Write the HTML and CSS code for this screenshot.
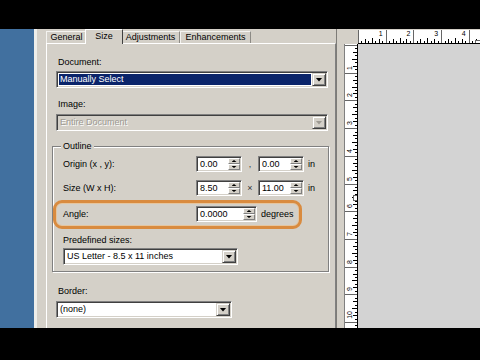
FILE: index.html
```html
<!DOCTYPE html>
<html>
<head>
<meta charset="utf-8">
<title>Size</title>
<link rel="stylesheet" href="styles.css">
</head>
<body>
<div class="screen">
  <div class="topbar"></div>
  <div class="app">
    <div class="sidebar"></div>
    <div class="edge"></div>
    <div class="dialog">
      <div class="tabs">
        <div class="tab t-gen">General</div>
        <div class="tab t-size active">Size</div>
        <div class="tab t-adj">Adjustments</div>
        <div class="tab t-enh">Enhancements</div>
      </div>
      <div class="panel">
        <div class="label l-doc">Document:</div>
        <div class="combo wide selected"><span class="combo-text">Manually Select</span><span class="combo-btn"><i class="arrow"></i></span></div>
        <div class="label l-img">Image:</div>
        <div class="combo wide disabled"><span class="combo-text">Entire Document</span><span class="combo-btn"><i class="arrow"></i></span></div>

        <div class="group">
          <div class="group-title">Outline</div>
          <div class="row">
            <span class="row-label">Origin (x , y):</span>
            <span class="spin"><span class="spin-text">0.00</span><span class="spin-btns"><i class="up"></i><i class="down"></i></span></span>
            <span class="sep">,</span>
            <span class="spin"><span class="spin-text">0.00</span><span class="spin-btns"><i class="up"></i><i class="down"></i></span></span>
            <span class="unit">in</span>
          </div>
          <div class="row r-size">
            <span class="row-label">Size (W x H):</span>
            <span class="spin"><span class="spin-text">8.50</span><span class="spin-btns"><i class="up"></i><i class="down"></i></span></span>
            <span class="sep">&times;</span>
            <span class="spin"><span class="spin-text">11.00</span><span class="spin-btns"><i class="up"></i><i class="down"></i></span></span>
            <span class="unit">in</span>
          </div>
          <div class="row r-angle">
            <span class="row-label">Angle:</span>
            <span class="spin long"><span class="spin-text">0.0000</span><span class="spin-btns"><i class="up"></i><i class="down"></i></span></span>
            <span class="unit">degrees</span>
          </div>
          <div class="label in l-pre">Predefined sizes:</div>
          <div class="combo pre"><span class="combo-text">US Letter - 8.5 x 11 inches</span><span class="combo-btn"><i class="arrow"></i></span></div>
          <div class="highlight"></div>
        </div>

        <div class="label l-border">Border:</div>
        <div class="combo border-combo"><span class="combo-text">(none)</span><span class="combo-btn"><i class="arrow"></i></span></div>
      </div>
    </div>
    <div class="divider"></div>
    <div class="workspace">
      <div class="ruler-row">
        <div class="corner"></div>
        <div class="hruler">
          <div class="hcell">1</div>
          <div class="hcell">2</div>
          <div class="hcell">3</div>
          <div class="hcell">4</div>
          <div class="hcell"></div>
          <span class="marker-h"></span>
        </div>
      </div>
      <div class="work-body">
        <div class="vruler">
          <div class="vcell"><span>1</span></div>
          <div class="vcell"><span>2</span></div>
          <div class="vcell"><span>3</span></div>
          <div class="vcell"><span>4</span></div>
          <div class="vcell"><span>5</span></div>
          <div class="vcell"><span>6</span></div>
          <div class="vcell"><span>7</span></div>
          <div class="vcell"><span>8</span></div>
          <div class="vcell"><span>9</span></div>
          <div class="vcell"><span>10</span></div>
          <div class="vcell"></div>
          <span class="marker-v"></span>
        </div>
        <div class="canvas"></div>
      </div>
    </div>
  </div>
  <div class="bottombar"></div>
</div>
</body>
</html>
```

FILE: styles.css
```css
html, body {
  margin: 0;
  padding: 0;
  background: #000;
}
body {
  font-family: "Liberation Sans", Arial, sans-serif;
  font-size: 9px;
  color: #000;
}
.screen {
  width: 480px;
  height: 360px;
  display: flex;
  flex-direction: column;
  overflow: hidden;
}
.topbar {
  height: 29px;
  flex: none;
  background: #000;
}
.bottombar {
  flex: 1;
  background: #000;
}
.app {
  height: 299px;
  flex: none;
  display: flex;
  overflow: hidden;
}
.sidebar {
  width: 34px;
  flex: none;
  background: #41709f;
}
.edge {
  width: 3px;
  flex: none;
  background: #eeeeea;
}
.dialog {
  width: 299px;
  flex: none;
  box-sizing: border-box;
  padding-left: 9px;
  background: #d4d0c8;
  display: flex;
  flex-direction: column;
}

/* tabs */
.tabs {
  height: 14px;
  flex: none;
  display: flex;
  align-items: flex-end;
  position: relative;
  z-index: 1;
}
.tab {
  height: 12px;
  line-height: 11px;
  box-sizing: border-box;
  text-align: center;
  border-top: 1px solid #f4f3f0;
  border-left: 1px solid #f4f3f0;
  border-right: 1px solid #8c8a85;
  flex: none;
}
.t-gen { width: 41px; }
.t-size { width: 34px; }
.t-adj { width: 59px; }
.t-enh { width: 71px; }
.tab.active {
  height: 15px;
  width: 38px;
  line-height: 12px;
  margin: 0 -2px -1px -2px;
  background: #d4d0c8;
  border-color: #fff #404040 #404040 #fff;
  position: relative;
  z-index: 2;
}

/* panel */
.panel {
  flex: 1;
  border-top: 1px solid #fff;
  border-left: 1px solid #fff;
  border-right: 1px solid #808080;
  padding-left: 9px;
  display: flex;
  flex-direction: column;
  align-items: flex-start;
}
.label {
  line-height: 13px;
  padding-left: 2px;
  white-space: nowrap;
}
.label.in { padding-left: 0; }
.l-doc { margin-top: 12px; }
.l-img { margin-top: 10px; }
.l-pre { margin-top: 12px; }
.l-border { margin-top: 13px; }

/* combo boxes */
.combo {
  display: flex;
  height: 17px;
  box-sizing: border-box;
  border: 1px solid;
  border-color: #808080 #fff #fff #808080;
  box-shadow: inset 1px 1px 0 #404040, inset -1px -1px 0 #d4d0c8;
  background: #fff;
  padding: 1px;
  flex: none;
}
.combo.wide { width: 272px; margin-top: 2px; }
.combo.disabled { margin-top: 3px; background: #d4d0c8; }
.combo.pre { width: 175px; margin-top: 1px; }
.combo.border-combo { width: 176px; margin-top: 3px; }
.combo-text {
  flex: 1;
  line-height: 13px;
  padding-left: 2px;
  white-space: nowrap;
  overflow: hidden;
}
.selected .combo-text {
  margin: 1px 1px 1px 1px;
  line-height: 11px;
  padding-left: 1px;
  background: #0a246a;
  color: #fff;
}
.disabled .combo-text {
  color: #9d9a93;
  text-shadow: 1px 1px 0 #fff;
}
.combo-btn {
  width: 14px;
  height: 13px;
  box-sizing: border-box;
  flex: none;
  background: #d4d0c8;
  border: 1px solid;
  border-color: #d4d0c8 #404040 #404040 #d4d0c8;
  box-shadow: inset 1px 1px 0 #fff, inset -1px -1px 0 #808080;
  display: flex;
  align-items: center;
  justify-content: center;
}
.arrow {
  display: block;
  width: 7px;
  height: 4px;
  background: #000;
  clip-path: polygon(0 0, 100% 0, 50% 100%);
}
.disabled .arrow { background: #9d9a93; }

/* group */
.group {
  position: relative;
  margin: 15px 0 0 -4px;
  width: 277px;
  box-sizing: border-box;
  border: 1px solid #808080;
  box-shadow: inset 1px 1px 0 #fff, 1px 1px 0 #fff;
  padding: 9px 0 6px 10px;
  display: flex;
  flex-direction: column;
  align-items: flex-start;
}
.group-title {
  position: absolute;
  top: -7px;
  left: 8px;
  padding: 0 2px;
  line-height: 13px;
  background: #d4d0c8;
}
.row {
  display: flex;
  align-items: center;
  height: 16px;
  flex: none;
}
.r-size { margin-top: 8px; }
.r-angle { margin-top: 10px; }
.row-label {
  width: 133px;
  flex: none;
  white-space: nowrap;
}
.sep {
  width: 16px;
  text-align: center;
  flex: none;
  color: #333;
}
.unit {
  margin-left: 4px;
  white-space: nowrap;
}

/* spin boxes */
.spin {
  display: flex;
  width: 46px;
  height: 16px;
  box-sizing: border-box;
  border: 1px solid;
  border-color: #808080 #fff #fff #808080;
  box-shadow: inset 1px 1px 0 #404040, inset -1px -1px 0 #d4d0c8;
  background: #fff;
  padding: 1px;
  flex: none;
}
.spin.long { width: 61px; }
.spin-text {
  flex: 1;
  line-height: 12px;
  padding-left: 2px;
  white-space: nowrap;
}
.spin-btns {
  width: 12px;
  flex: none;
  display: flex;
  flex-direction: column;
}
.spin-btns i {
  flex: 1;
  box-sizing: border-box;
  background: #d4d0c8;
  border: 1px solid;
  border-color: #fff #808080 #808080 #fff;
  display: flex;
  align-items: center;
  justify-content: center;
}
.spin-btns i::after {
  content: "";
  display: block;
  width: 5px;
  height: 2px;
  background: #000;
}
.spin-btns .up::after { clip-path: polygon(50% 0, 100% 100%, 0 100%); }
.spin-btns .down::after { clip-path: polygon(0 0, 100% 0, 50% 100%); }

.highlight {
  position: absolute;
  left: 0;
  top: 53px;
  width: 249px;
  height: 29px;
  box-sizing: border-box;
  border: 3px solid #d98b3f;
  border-radius: 9px;
  box-shadow: inset 0 0 0 1px rgba(240, 190, 130, 0.6);
}

/* workspace */
.divider {
  width: 8px;
  flex: none;
  box-sizing: border-box;
  border-left: 1px solid #7d7b77;
  background: #d4d0c8;
}
.workspace {
  flex: 1;
  display: flex;
  flex-direction: column;
  background: #d3d3d3;
}
.ruler-row {
  height: 15px;
  flex: none;
  display: flex;
  background: #d4d0c8;
}
.corner {
  width: 14px;
  flex: none;
}
.hruler {
  flex: 1;
  margin-top: 1px;
  box-sizing: border-box;
  border-bottom: 1px solid #000;
  position: relative;
  display: flex;
  overflow: hidden;
  background:
    repeating-linear-gradient(90deg, #666 0 1px, transparent 1px 27.7px),
    repeating-linear-gradient(90deg, #000 0 1px, transparent 1px 13.85px) 0 100% / 100% 5px no-repeat,
    repeating-linear-gradient(90deg, #000 0 1px, transparent 1px 6.925px) 0 100% / 100% 4px no-repeat,
    repeating-linear-gradient(90deg, #000 0 1px, transparent 1px 3.4625px) 0 100% / 100% 2px no-repeat,
    #fff;
}
.hcell {
  width: 27.7px;
  flex: none;
  box-sizing: border-box;
  text-align: right;
  padding-right: 3px;
  font-size: 7px;
  line-height: 8px;
}
.work-body {
  flex: 1;
  display: flex;
}
.vruler {
  width: 14px;
  flex: none;
  box-sizing: border-box;
  border-left: 1px solid #808080;
  border-right: 1px solid #000;
  padding-top: 1px;
  position: relative;
  display: flex;
  flex-direction: column;
  overflow: hidden;
  background:
    repeating-linear-gradient(180deg, #666 0 1px, transparent 1px 27.7px) 0 1px / 100% 100% no-repeat,
    repeating-linear-gradient(180deg, #000 0 1px, transparent 1px 13.85px) 100% 1px / 5px 100% no-repeat,
    repeating-linear-gradient(180deg, #000 0 1px, transparent 1px 6.925px) 100% 1px / 4px 100% no-repeat,
    repeating-linear-gradient(180deg, #000 0 1px, transparent 1px 3.4625px) 100% 1px / 2px 100% no-repeat,
    #fff;
}
.vcell {
  height: 27.7px;
  flex: none;
  display: flex;
  align-items: flex-end;
  padding-left: 1px;
}
.vcell span {
  writing-mode: vertical-rl;
  transform: rotate(180deg);
  font-size: 7px;
  line-height: 8px;
  margin-bottom: 3px;
}
.marker-v {
  position: absolute;
  right: -1px;
  top: 151px;
  width: 3px;
  height: 4px;
  background: #fff;
  border: 1px solid #666;
}
.marker-h {
  position: absolute;
  left: 117px;
  bottom: -1px;
  width: 4px;
  height: 2px;
  background: #fff;
  border: 1px solid #666;
}
.canvas {
  flex: 1;
  background: #d3d3d3;
}
```
